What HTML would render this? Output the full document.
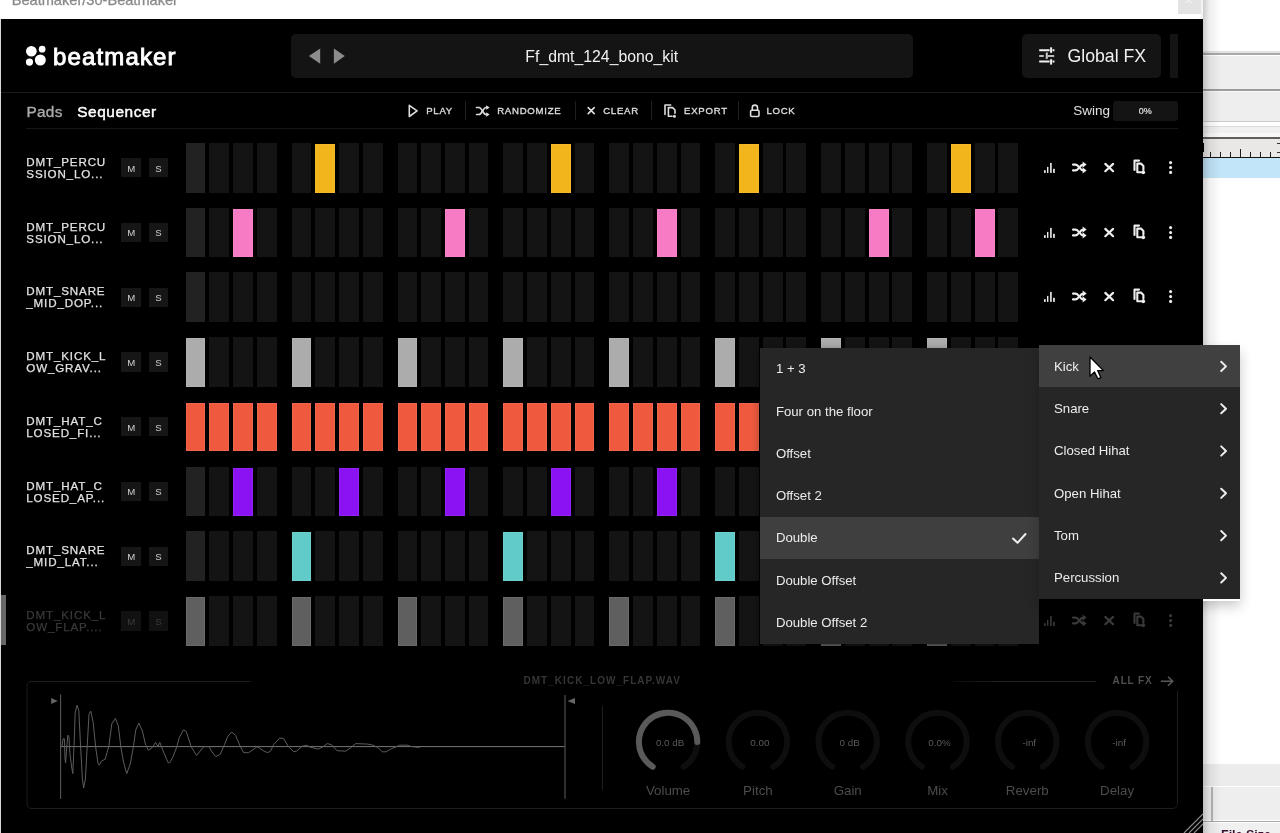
<!DOCTYPE html><html><head><meta charset="utf-8"><style>html,body{margin:0;padding:0;}body{width:1280px;height:833px;overflow:hidden;position:relative;background:#fff;font-family:"Liberation Sans", sans-serif;}#root{position:absolute;left:0;top:0;width:1280px;height:833px;will-change:transform;}#root>div,#root>svg{position:absolute;}</style></head><body><div id="root"><div style="left:1203px;top:0px;width:77px;height:833px;background:#ffffff;"></div>
<div style="left:1203px;top:51px;width:77px;height:2px;background:#e2e2e2;"></div>
<div style="left:1203px;top:53px;width:77px;height:2px;background:#a9a9a9;"></div>
<div style="left:1203px;top:55px;width:77px;height:1px;background:#ffffff;"></div>
<div style="left:1203px;top:56px;width:77px;height:33px;background:#eeeeee;"></div>
<div style="left:1203px;top:89px;width:77px;height:2px;background:#9c9c9c;"></div>
<div style="left:1203px;top:91px;width:77px;height:1px;background:#fafafa;"></div>
<div style="left:1203px;top:92px;width:77px;height:29px;background:#eeeeee;"></div>
<div style="left:1203px;top:121px;width:77px;height:1px;background:#cccccc;"></div>
<div style="left:1203px;top:122px;width:77px;height:4px;background:#ffffff;"></div>
<div style="left:1203px;top:126px;width:77px;height:1px;background:#dcdcdc;"></div>
<div style="left:1203px;top:127px;width:77px;height:6px;background:#f0f0f0;"></div>
<div style="left:1203px;top:133px;width:77px;height:4px;background:#f8f8f8;"></div>
<div style="left:1203px;top:137px;width:77px;height:2px;background:#5e5e5e;"></div>
<div style="left:1203px;top:139px;width:77px;height:18px;background:#e9e8e6;"></div>
<div style="left:1210.0px;top:152px;width:1px;height:5px;background:#1e1e1e"></div><div style="left:1220.0px;top:152px;width:1px;height:5px;background:#1e1e1e"></div><div style="left:1230.1px;top:152px;width:1px;height:5px;background:#1e1e1e"></div><div style="left:1240.2px;top:149px;width:1px;height:8px;background:#1e1e1e"></div><div style="left:1250.2px;top:152px;width:1px;height:5px;background:#1e1e1e"></div><div style="left:1260.2px;top:152px;width:1px;height:5px;background:#1e1e1e"></div><div style="left:1270.3px;top:152px;width:1px;height:5px;background:#1e1e1e"></div>
<div style="left:1277px;top:143px;width:3px;height:1.2px;background:#333333;"></div>
<div style="left:1277px;top:152px;width:3px;height:1.2px;background:#333333;"></div>
<div style="left:1203px;top:143px;width:1px;height:8.5px;background:#000000;"></div>
<div style="left:1203px;top:157px;width:77px;height:1px;background:#111111;"></div>
<div style="left:1203px;top:158px;width:77px;height:19.6px;background:#c2e5f9;"></div>
<div style="left:1203px;top:764px;width:77px;height:22px;background:#ececec;"></div>
<div style="left:1203px;top:787px;width:77px;height:33px;background:#eeeeee;"></div>
<div style="left:1211px;top:787px;width:1.6px;height:33.5px;background:#b4b4b4;"></div>
<div style="left:1214px;top:824px;width:1px;height:9px;background:#dddddd;"></div>
<div style="left:1203px;top:820.5px;width:77px;height:1.3px;background:#a8a8a8;"></div>
<div style="left:1203px;top:821.8px;width:77px;height:1.4px;background:#ffffff;"></div>
<div style="left:1203px;top:823px;width:77px;height:10px;background:#f0f0f0;"></div>
<div style="left:1221.00px;top:827.86px;font-size:12.5px;line-height:15.62px;color:#3a1030;text-align:left;white-space:nowrap;font-weight:bold;">File Size</div>
<div style="left:1203px;top:0px;width:18px;height:833px;background:linear-gradient(to right, rgba(0,0,0,0.2), rgba(0,0,0,0.07) 35%, rgba(0,0,0,0));"></div>
<div style="left:0px;top:0px;width:1203px;height:19px;background:#ffffff;"></div>
<div style="left:11.70px;top:-8.88px;font-size:14.6px;line-height:18.25px;color:#8a8a8a;text-align:left;white-space:nowrap;-webkit-text-stroke:0.3px #8a8a8a;">Beatmaker/30-Beatmaker</div>
<div style="left:1178px;top:0px;width:22.8px;height:13.7px;background:#e3e3e3;"></div>
<div style="left:1200.8px;top:0px;width:2.2px;height:18.75px;background:#f4f4f4;"></div>
<div style="left:1184.50px;top:-6.66px;font-size:12px;line-height:15.0px;color:#f2f2f2;text-align:left;white-space:nowrap;font-size:14px;">×</div>
<div style="left:0px;top:19px;width:1px;height:814px;background:#d8d8d8;"></div>
<div style="left:1px;top:19px;width:1202px;height:814px;background:#000000;"></div>
<svg style="left:0;top:0" width="1203" height="130" viewBox="0 0 1203 130"><circle cx="31.36" cy="51.27" r="5.35" fill="#fff"/><circle cx="42.16" cy="49.2" r="3.35" fill="#fff"/><circle cx="29.47" cy="62.1" r="3.6" fill="#fff"/><circle cx="40.3" cy="60" r="5.5" fill="#fff"/></svg>
<div style="left:53.00px;top:41.98px;font-size:24px;line-height:30.0px;color:#ffffff;text-align:left;white-space:nowrap;-webkit-text-stroke:0.9px #fff;letter-spacing:1.15px;">beatmaker</div>
<div style="left:290.5px;top:33.7px;width:622.5px;height:44.3px;background:#141414;border-radius:5px;"></div>
<svg style="left:300px;top:40px" width="60" height="30" viewBox="300 40 60 30"><path d="M320.2 48.4 L308.9 56.05 L320.2 63.7 Z" fill="#8c8c8c"/><path d="M333.9 48.4 L344.8 56.05 L333.9 63.7 Z" fill="#8c8c8c"/></svg>
<div style="left:290.50px;top:46.85px;font-size:15.8px;line-height:19.75px;color:#f0f0f0;text-align:center;width:622.5px;">Ff_dmt_124_bono_kit</div>
<div style="left:1022.3px;top:33.75px;width:139px;height:44.25px;background:#141414;border-radius:5px;"></div>
<div style="left:1170.25px;top:33.75px;width:7.25px;height:44.25px;background:#141414;"></div>
<svg style="left:1030px;top:40px" width="30" height="30" viewBox="1030 40 30 30"><g stroke="#f2f2f2" stroke-width="2" fill="none"><path d="M1039.2 50.2 H1049.6 M1052.5 50.2 H1054.5"/><path d="M1051.1 47.3 V52.8"/><path d="M1039.2 56 H1043.8 M1047.8 56 H1054.2" stroke="#bbbbbb"/><path d="M1046.8 52.5 V58.9" stroke="#cccccc"/><path d="M1039.2 61.6 H1049.6 M1052.5 61.6 H1054.5"/><path d="M1051.1 59.2 V64.6"/></g></svg>
<div style="left:1067.50px;top:44.91px;font-size:17.7px;line-height:22.12px;color:#f0f0f0;text-align:left;white-space:nowrap;">Global FX</div>
<div style="left:1px;top:92.3px;width:1202px;height:1px;background:#1a1a1a;"></div>
<div style="left:26.40px;top:101.79px;font-size:15.4px;line-height:19.25px;color:#aaaaaa;text-align:left;white-space:nowrap;-webkit-text-stroke:0.35px #aaaaaa;letter-spacing:0.3px;">Pads</div>
<div style="left:77.30px;top:101.79px;font-size:15.4px;line-height:19.25px;color:#ffffff;text-align:left;white-space:nowrap;-webkit-text-stroke:0.45px #fff;letter-spacing:0.55px;">Sequencer</div>
<div style="left:465.1px;top:101px;width:1px;height:19px;background:#1e1e1e;"></div>
<div style="left:574.8px;top:101px;width:1px;height:19px;background:#1e1e1e;"></div>
<div style="left:650.8px;top:101px;width:1px;height:19px;background:#1e1e1e;"></div>
<div style="left:737.5px;top:101px;width:1px;height:19px;background:#1e1e1e;"></div>
<div style="left:426.20px;top:105.07px;font-size:9.6px;line-height:12.0px;color:#dcdcdc;text-align:left;white-space:nowrap;letter-spacing:0.75px;-webkit-text-stroke:0.35px #dcdcdc;">PLAY</div>
<div style="left:497.20px;top:105.07px;font-size:9.6px;line-height:12.0px;color:#dcdcdc;text-align:left;white-space:nowrap;letter-spacing:0.75px;-webkit-text-stroke:0.35px #dcdcdc;">RANDOMIZE</div>
<div style="left:603.20px;top:105.07px;font-size:9.6px;line-height:12.0px;color:#dcdcdc;text-align:left;white-space:nowrap;letter-spacing:0.75px;-webkit-text-stroke:0.35px #dcdcdc;">CLEAR</div>
<div style="left:684.00px;top:105.07px;font-size:9.6px;line-height:12.0px;color:#dcdcdc;text-align:left;white-space:nowrap;letter-spacing:0.75px;-webkit-text-stroke:0.35px #dcdcdc;">EXPORT</div>
<div style="left:766.40px;top:105.07px;font-size:9.6px;line-height:12.0px;color:#dcdcdc;text-align:left;white-space:nowrap;letter-spacing:0.75px;-webkit-text-stroke:0.35px #dcdcdc;">LOCK</div>
<svg style="left:400px;top:98px" width="370" height="26" viewBox="400 98 370 26"><g stroke="#dddddd" stroke-width="1.6" fill="none" stroke-linejoin="round" stroke-linecap="round"><path d="M409.3 105.3 L417.1 110.9 L409.3 116.5 Z"/><path d="M476.5 107.5 H479 C482 107.5 483 114.5 486 114.5 H488"/><path d="M476.5 114.5 H479 C482 114.5 483 107.5 486 107.5 H488"/><path d="M588.2 107.6 L594.2 113.6 M594.2 107.6 L588.2 113.6"/><path d="M670.7 105 H665 V114.5"/><path d="M668.4 107.6 H672.6 L675 110 V113.2 M668.4 107.6 V116.2 H672"/><path d="M752.3 110.3 V107.6 C752.3 104.3 757.5 104.3 757.5 107.6 V110.3"/><rect x="750.6" y="110.3" width="8.4" height="6.2" rx="1.2"/></g><g fill="#dddddd"><path d="M486.2 105.2 L489.6 107.5 L486.2 109.8 Z"/><path d="M486.2 112.2 L489.6 114.5 L486.2 116.8 Z"/><circle cx="674.4" cy="116.2" r="1.5"/></g></svg>
<div style="left:1073.20px;top:102.68px;font-size:13.5px;line-height:16.88px;color:#e0e0e0;text-align:left;white-space:nowrap;">Swing</div>
<div style="left:1113px;top:100.9px;width:64.6px;height:19.7px;background:#141414;border-radius:3px;"></div>
<div style="left:1113.00px;top:105.56px;font-size:9px;line-height:11.25px;color:#e2e2e2;text-align:center;width:64.6px;-webkit-text-stroke:0.2px #e2e2e2;">0%</div>
<div style="left:26.25px;top:128.1px;width:1151.5px;height:1px;background:#161616;"></div>
<div style="left:26.30px;top:155.03px;font-size:11.6px;line-height:14.5px;color:#e2e2e2;text-align:left;white-space:nowrap;letter-spacing:0.85px;-webkit-text-stroke:0.25px #e2e2e2;">DMT_PERCU</div>
<div style="left:26.30px;top:166.93px;font-size:11.6px;line-height:14.5px;color:#e2e2e2;text-align:left;white-space:nowrap;letter-spacing:0.85px;-webkit-text-stroke:0.25px #e2e2e2;">SSION_LO...</div>
<div style="left:121.2px;top:158.3px;width:19.5px;height:19.2px;background:#161616;"></div>
<div style="left:121.50px;top:162.67px;font-size:9.6px;line-height:12.0px;color:#d0d0d0;text-align:center;width:19.5px;">M</div>
<div style="left:148.5px;top:158.3px;width:19.5px;height:19.2px;background:#161616;"></div>
<div style="left:148.80px;top:162.67px;font-size:9.6px;line-height:12.0px;color:#d0d0d0;text-align:center;width:19.5px;">S</div>
<div style="left:185.60px;top:143.00px;width:19.9px;height:49.6px;background:#222222"></div><div style="left:209.30px;top:143.00px;width:19.9px;height:49.6px;background:#141414"></div><div style="left:233.00px;top:143.00px;width:19.9px;height:49.6px;background:#141414"></div><div style="left:256.70px;top:143.00px;width:19.9px;height:49.6px;background:#141414"></div><div style="left:291.55px;top:143.00px;width:19.9px;height:49.6px;background:#141414"></div><div style="left:315.25px;top:144.00px;width:19.9px;height:48.6px;background:#f2b51b;box-shadow:inset 0 0 0 1px rgba(255,255,255,0.07)"></div><div style="left:338.95px;top:143.00px;width:19.9px;height:49.6px;background:#141414"></div><div style="left:362.65px;top:143.00px;width:19.9px;height:49.6px;background:#141414"></div><div style="left:397.50px;top:143.00px;width:19.9px;height:49.6px;background:#141414"></div><div style="left:421.20px;top:143.00px;width:19.9px;height:49.6px;background:#141414"></div><div style="left:444.90px;top:143.00px;width:19.9px;height:49.6px;background:#141414"></div><div style="left:468.60px;top:143.00px;width:19.9px;height:49.6px;background:#141414"></div><div style="left:503.45px;top:143.00px;width:19.9px;height:49.6px;background:#141414"></div><div style="left:527.15px;top:143.00px;width:19.9px;height:49.6px;background:#141414"></div><div style="left:550.85px;top:144.00px;width:19.9px;height:48.6px;background:#f2b51b;box-shadow:inset 0 0 0 1px rgba(255,255,255,0.07)"></div><div style="left:574.55px;top:143.00px;width:19.9px;height:49.6px;background:#141414"></div><div style="left:609.40px;top:143.00px;width:19.9px;height:49.6px;background:#141414"></div><div style="left:633.10px;top:143.00px;width:19.9px;height:49.6px;background:#141414"></div><div style="left:656.80px;top:143.00px;width:19.9px;height:49.6px;background:#141414"></div><div style="left:680.50px;top:143.00px;width:19.9px;height:49.6px;background:#141414"></div><div style="left:715.35px;top:143.00px;width:19.9px;height:49.6px;background:#141414"></div><div style="left:739.05px;top:144.00px;width:19.9px;height:48.6px;background:#f2b51b;box-shadow:inset 0 0 0 1px rgba(255,255,255,0.07)"></div><div style="left:762.75px;top:143.00px;width:19.9px;height:49.6px;background:#141414"></div><div style="left:786.45px;top:143.00px;width:19.9px;height:49.6px;background:#141414"></div><div style="left:821.30px;top:143.00px;width:19.9px;height:49.6px;background:#141414"></div><div style="left:845.00px;top:143.00px;width:19.9px;height:49.6px;background:#141414"></div><div style="left:868.70px;top:143.00px;width:19.9px;height:49.6px;background:#141414"></div><div style="left:892.40px;top:143.00px;width:19.9px;height:49.6px;background:#141414"></div><div style="left:927.25px;top:143.00px;width:19.9px;height:49.6px;background:#141414"></div><div style="left:950.95px;top:144.00px;width:19.9px;height:48.6px;background:#f2b51b;box-shadow:inset 0 0 0 1px rgba(255,255,255,0.07)"></div><div style="left:974.65px;top:143.00px;width:19.9px;height:49.6px;background:#141414"></div><div style="left:998.35px;top:143.00px;width:19.9px;height:49.6px;background:#141414"></div>
<svg style="left:1035px;top:143.00px" width="150" height="50" viewBox="1035 143 150 50"><g fill="#eeeeee"><rect x="1044" y="170.2" width="1.7" height="2.7"/><rect x="1047" y="166.9" width="1.4" height="6"/><rect x="1050.1" y="162.9" width="1.6" height="10"/><rect x="1053.1" y="168.8" width="1.7" height="4.1"/><path d="M1082.6 161.4 L1086.6 164.6 L1082.6 167.8 Z"/><path d="M1082.6 167.2 L1086.6 170.4 L1082.6 173.6 Z"/><circle cx="1143.2" cy="172.3" r="1.9"/><circle cx="1170.6" cy="162.6" r="1.55"/><circle cx="1170.6" cy="167.5" r="1.55"/><circle cx="1170.6" cy="172.4" r="1.55"/></g><g stroke="#eeeeee" stroke-width="2.1" fill="none" stroke-linecap="round" stroke-linejoin="round"><path d="M1073 164.6 H1075.5 C1079 164.6 1079.5 170.4 1083.5 170.4 H1084"/><path d="M1073 170.4 H1075.5 C1079 170.4 1079.5 164.6 1083.5 164.6 H1084"/><path d="M1105.3 163.9 L1113.1 171.2 M1113.1 163.9 L1105.3 171.2" stroke-width="2.2"/><path d="M1139 160.6 H1134.5 V170"/><path d="M1137.3 163.6 H1141 L1143.4 166 V170 M1137.3 163.6 V172.3 H1141"/></g></svg>
<div style="left:26.30px;top:219.75px;font-size:11.6px;line-height:14.5px;color:#e2e2e2;text-align:left;white-space:nowrap;letter-spacing:0.85px;-webkit-text-stroke:0.25px #e2e2e2;">DMT_PERCU</div>
<div style="left:26.30px;top:231.65px;font-size:11.6px;line-height:14.5px;color:#e2e2e2;text-align:left;white-space:nowrap;letter-spacing:0.85px;-webkit-text-stroke:0.25px #e2e2e2;">SSION_LO...</div>
<div style="left:121.2px;top:223.02px;width:19.5px;height:19.2px;background:#161616;"></div>
<div style="left:121.50px;top:227.39px;font-size:9.6px;line-height:12.0px;color:#d0d0d0;text-align:center;width:19.5px;">M</div>
<div style="left:148.5px;top:223.02px;width:19.5px;height:19.2px;background:#161616;"></div>
<div style="left:148.80px;top:227.39px;font-size:9.6px;line-height:12.0px;color:#d0d0d0;text-align:center;width:19.5px;">S</div>
<div style="left:185.60px;top:207.72px;width:19.9px;height:49.6px;background:#222222"></div><div style="left:209.30px;top:207.72px;width:19.9px;height:49.6px;background:#141414"></div><div style="left:233.00px;top:208.72px;width:19.9px;height:48.6px;background:#f77bc4;box-shadow:inset 0 0 0 1px rgba(255,255,255,0.07)"></div><div style="left:256.70px;top:207.72px;width:19.9px;height:49.6px;background:#141414"></div><div style="left:291.55px;top:207.72px;width:19.9px;height:49.6px;background:#141414"></div><div style="left:315.25px;top:207.72px;width:19.9px;height:49.6px;background:#141414"></div><div style="left:338.95px;top:207.72px;width:19.9px;height:49.6px;background:#141414"></div><div style="left:362.65px;top:207.72px;width:19.9px;height:49.6px;background:#141414"></div><div style="left:397.50px;top:207.72px;width:19.9px;height:49.6px;background:#141414"></div><div style="left:421.20px;top:207.72px;width:19.9px;height:49.6px;background:#141414"></div><div style="left:444.90px;top:208.72px;width:19.9px;height:48.6px;background:#f77bc4;box-shadow:inset 0 0 0 1px rgba(255,255,255,0.07)"></div><div style="left:468.60px;top:207.72px;width:19.9px;height:49.6px;background:#141414"></div><div style="left:503.45px;top:207.72px;width:19.9px;height:49.6px;background:#141414"></div><div style="left:527.15px;top:207.72px;width:19.9px;height:49.6px;background:#141414"></div><div style="left:550.85px;top:207.72px;width:19.9px;height:49.6px;background:#141414"></div><div style="left:574.55px;top:207.72px;width:19.9px;height:49.6px;background:#141414"></div><div style="left:609.40px;top:207.72px;width:19.9px;height:49.6px;background:#141414"></div><div style="left:633.10px;top:207.72px;width:19.9px;height:49.6px;background:#141414"></div><div style="left:656.80px;top:208.72px;width:19.9px;height:48.6px;background:#f77bc4;box-shadow:inset 0 0 0 1px rgba(255,255,255,0.07)"></div><div style="left:680.50px;top:207.72px;width:19.9px;height:49.6px;background:#141414"></div><div style="left:715.35px;top:207.72px;width:19.9px;height:49.6px;background:#141414"></div><div style="left:739.05px;top:207.72px;width:19.9px;height:49.6px;background:#141414"></div><div style="left:762.75px;top:207.72px;width:19.9px;height:49.6px;background:#141414"></div><div style="left:786.45px;top:207.72px;width:19.9px;height:49.6px;background:#141414"></div><div style="left:821.30px;top:207.72px;width:19.9px;height:49.6px;background:#141414"></div><div style="left:845.00px;top:207.72px;width:19.9px;height:49.6px;background:#141414"></div><div style="left:868.70px;top:208.72px;width:19.9px;height:48.6px;background:#f77bc4;box-shadow:inset 0 0 0 1px rgba(255,255,255,0.07)"></div><div style="left:892.40px;top:207.72px;width:19.9px;height:49.6px;background:#141414"></div><div style="left:927.25px;top:207.72px;width:19.9px;height:49.6px;background:#141414"></div><div style="left:950.95px;top:207.72px;width:19.9px;height:49.6px;background:#141414"></div><div style="left:974.65px;top:208.72px;width:19.9px;height:48.6px;background:#f77bc4;box-shadow:inset 0 0 0 1px rgba(255,255,255,0.07)"></div><div style="left:998.35px;top:207.72px;width:19.9px;height:49.6px;background:#141414"></div>
<svg style="left:1035px;top:207.72px" width="150" height="50" viewBox="1035 143 150 50"><g fill="#eeeeee"><rect x="1044" y="170.2" width="1.7" height="2.7"/><rect x="1047" y="166.9" width="1.4" height="6"/><rect x="1050.1" y="162.9" width="1.6" height="10"/><rect x="1053.1" y="168.8" width="1.7" height="4.1"/><path d="M1082.6 161.4 L1086.6 164.6 L1082.6 167.8 Z"/><path d="M1082.6 167.2 L1086.6 170.4 L1082.6 173.6 Z"/><circle cx="1143.2" cy="172.3" r="1.9"/><circle cx="1170.6" cy="162.6" r="1.55"/><circle cx="1170.6" cy="167.5" r="1.55"/><circle cx="1170.6" cy="172.4" r="1.55"/></g><g stroke="#eeeeee" stroke-width="2.1" fill="none" stroke-linecap="round" stroke-linejoin="round"><path d="M1073 164.6 H1075.5 C1079 164.6 1079.5 170.4 1083.5 170.4 H1084"/><path d="M1073 170.4 H1075.5 C1079 170.4 1079.5 164.6 1083.5 164.6 H1084"/><path d="M1105.3 163.9 L1113.1 171.2 M1113.1 163.9 L1105.3 171.2" stroke-width="2.2"/><path d="M1139 160.6 H1134.5 V170"/><path d="M1137.3 163.6 H1141 L1143.4 166 V170 M1137.3 163.6 V172.3 H1141"/></g></svg>
<div style="left:26.30px;top:284.47px;font-size:11.6px;line-height:14.5px;color:#e2e2e2;text-align:left;white-space:nowrap;letter-spacing:0.85px;-webkit-text-stroke:0.25px #e2e2e2;">DMT_SNARE</div>
<div style="left:26.30px;top:296.37px;font-size:11.6px;line-height:14.5px;color:#e2e2e2;text-align:left;white-space:nowrap;letter-spacing:0.85px;-webkit-text-stroke:0.25px #e2e2e2;">_MID_DOP...</div>
<div style="left:121.2px;top:287.74px;width:19.5px;height:19.2px;background:#161616;"></div>
<div style="left:121.50px;top:292.11px;font-size:9.6px;line-height:12.0px;color:#d0d0d0;text-align:center;width:19.5px;">M</div>
<div style="left:148.5px;top:287.74px;width:19.5px;height:19.2px;background:#161616;"></div>
<div style="left:148.80px;top:292.11px;font-size:9.6px;line-height:12.0px;color:#d0d0d0;text-align:center;width:19.5px;">S</div>
<div style="left:185.60px;top:272.44px;width:19.9px;height:49.6px;background:#222222"></div><div style="left:209.30px;top:272.44px;width:19.9px;height:49.6px;background:#141414"></div><div style="left:233.00px;top:272.44px;width:19.9px;height:49.6px;background:#141414"></div><div style="left:256.70px;top:272.44px;width:19.9px;height:49.6px;background:#141414"></div><div style="left:291.55px;top:272.44px;width:19.9px;height:49.6px;background:#141414"></div><div style="left:315.25px;top:272.44px;width:19.9px;height:49.6px;background:#141414"></div><div style="left:338.95px;top:272.44px;width:19.9px;height:49.6px;background:#141414"></div><div style="left:362.65px;top:272.44px;width:19.9px;height:49.6px;background:#141414"></div><div style="left:397.50px;top:272.44px;width:19.9px;height:49.6px;background:#141414"></div><div style="left:421.20px;top:272.44px;width:19.9px;height:49.6px;background:#141414"></div><div style="left:444.90px;top:272.44px;width:19.9px;height:49.6px;background:#141414"></div><div style="left:468.60px;top:272.44px;width:19.9px;height:49.6px;background:#141414"></div><div style="left:503.45px;top:272.44px;width:19.9px;height:49.6px;background:#141414"></div><div style="left:527.15px;top:272.44px;width:19.9px;height:49.6px;background:#141414"></div><div style="left:550.85px;top:272.44px;width:19.9px;height:49.6px;background:#141414"></div><div style="left:574.55px;top:272.44px;width:19.9px;height:49.6px;background:#141414"></div><div style="left:609.40px;top:272.44px;width:19.9px;height:49.6px;background:#141414"></div><div style="left:633.10px;top:272.44px;width:19.9px;height:49.6px;background:#141414"></div><div style="left:656.80px;top:272.44px;width:19.9px;height:49.6px;background:#141414"></div><div style="left:680.50px;top:272.44px;width:19.9px;height:49.6px;background:#141414"></div><div style="left:715.35px;top:272.44px;width:19.9px;height:49.6px;background:#141414"></div><div style="left:739.05px;top:272.44px;width:19.9px;height:49.6px;background:#141414"></div><div style="left:762.75px;top:272.44px;width:19.9px;height:49.6px;background:#141414"></div><div style="left:786.45px;top:272.44px;width:19.9px;height:49.6px;background:#141414"></div><div style="left:821.30px;top:272.44px;width:19.9px;height:49.6px;background:#141414"></div><div style="left:845.00px;top:272.44px;width:19.9px;height:49.6px;background:#141414"></div><div style="left:868.70px;top:272.44px;width:19.9px;height:49.6px;background:#141414"></div><div style="left:892.40px;top:272.44px;width:19.9px;height:49.6px;background:#141414"></div><div style="left:927.25px;top:272.44px;width:19.9px;height:49.6px;background:#141414"></div><div style="left:950.95px;top:272.44px;width:19.9px;height:49.6px;background:#141414"></div><div style="left:974.65px;top:272.44px;width:19.9px;height:49.6px;background:#141414"></div><div style="left:998.35px;top:272.44px;width:19.9px;height:49.6px;background:#141414"></div>
<svg style="left:1035px;top:272.44px" width="150" height="50" viewBox="1035 143 150 50"><g fill="#eeeeee"><rect x="1044" y="170.2" width="1.7" height="2.7"/><rect x="1047" y="166.9" width="1.4" height="6"/><rect x="1050.1" y="162.9" width="1.6" height="10"/><rect x="1053.1" y="168.8" width="1.7" height="4.1"/><path d="M1082.6 161.4 L1086.6 164.6 L1082.6 167.8 Z"/><path d="M1082.6 167.2 L1086.6 170.4 L1082.6 173.6 Z"/><circle cx="1143.2" cy="172.3" r="1.9"/><circle cx="1170.6" cy="162.6" r="1.55"/><circle cx="1170.6" cy="167.5" r="1.55"/><circle cx="1170.6" cy="172.4" r="1.55"/></g><g stroke="#eeeeee" stroke-width="2.1" fill="none" stroke-linecap="round" stroke-linejoin="round"><path d="M1073 164.6 H1075.5 C1079 164.6 1079.5 170.4 1083.5 170.4 H1084"/><path d="M1073 170.4 H1075.5 C1079 170.4 1079.5 164.6 1083.5 164.6 H1084"/><path d="M1105.3 163.9 L1113.1 171.2 M1113.1 163.9 L1105.3 171.2" stroke-width="2.2"/><path d="M1139 160.6 H1134.5 V170"/><path d="M1137.3 163.6 H1141 L1143.4 166 V170 M1137.3 163.6 V172.3 H1141"/></g></svg>
<div style="left:26.30px;top:349.19px;font-size:11.6px;line-height:14.5px;color:#e2e2e2;text-align:left;white-space:nowrap;letter-spacing:0.85px;-webkit-text-stroke:0.25px #e2e2e2;">DMT_KICK_L</div>
<div style="left:26.30px;top:361.09px;font-size:11.6px;line-height:14.5px;color:#e2e2e2;text-align:left;white-space:nowrap;letter-spacing:0.85px;-webkit-text-stroke:0.25px #e2e2e2;">OW_GRAV...</div>
<div style="left:121.2px;top:352.46px;width:19.5px;height:19.2px;background:#161616;"></div>
<div style="left:121.50px;top:356.83px;font-size:9.6px;line-height:12.0px;color:#d0d0d0;text-align:center;width:19.5px;">M</div>
<div style="left:148.5px;top:352.46px;width:19.5px;height:19.2px;background:#161616;"></div>
<div style="left:148.80px;top:356.83px;font-size:9.6px;line-height:12.0px;color:#d0d0d0;text-align:center;width:19.5px;">S</div>
<div style="left:185.60px;top:338.16px;width:19.9px;height:48.6px;background:#acacac;box-shadow:inset 0 0 0 1px rgba(255,255,255,0.07)"></div><div style="left:209.30px;top:337.16px;width:19.9px;height:49.6px;background:#141414"></div><div style="left:233.00px;top:337.16px;width:19.9px;height:49.6px;background:#141414"></div><div style="left:256.70px;top:337.16px;width:19.9px;height:49.6px;background:#141414"></div><div style="left:291.55px;top:338.16px;width:19.9px;height:48.6px;background:#acacac;box-shadow:inset 0 0 0 1px rgba(255,255,255,0.07)"></div><div style="left:315.25px;top:337.16px;width:19.9px;height:49.6px;background:#141414"></div><div style="left:338.95px;top:337.16px;width:19.9px;height:49.6px;background:#141414"></div><div style="left:362.65px;top:337.16px;width:19.9px;height:49.6px;background:#141414"></div><div style="left:397.50px;top:338.16px;width:19.9px;height:48.6px;background:#acacac;box-shadow:inset 0 0 0 1px rgba(255,255,255,0.07)"></div><div style="left:421.20px;top:337.16px;width:19.9px;height:49.6px;background:#141414"></div><div style="left:444.90px;top:337.16px;width:19.9px;height:49.6px;background:#141414"></div><div style="left:468.60px;top:337.16px;width:19.9px;height:49.6px;background:#141414"></div><div style="left:503.45px;top:338.16px;width:19.9px;height:48.6px;background:#acacac;box-shadow:inset 0 0 0 1px rgba(255,255,255,0.07)"></div><div style="left:527.15px;top:337.16px;width:19.9px;height:49.6px;background:#141414"></div><div style="left:550.85px;top:337.16px;width:19.9px;height:49.6px;background:#141414"></div><div style="left:574.55px;top:337.16px;width:19.9px;height:49.6px;background:#141414"></div><div style="left:609.40px;top:338.16px;width:19.9px;height:48.6px;background:#acacac;box-shadow:inset 0 0 0 1px rgba(255,255,255,0.07)"></div><div style="left:633.10px;top:337.16px;width:19.9px;height:49.6px;background:#141414"></div><div style="left:656.80px;top:337.16px;width:19.9px;height:49.6px;background:#141414"></div><div style="left:680.50px;top:337.16px;width:19.9px;height:49.6px;background:#141414"></div><div style="left:715.35px;top:338.16px;width:19.9px;height:48.6px;background:#acacac;box-shadow:inset 0 0 0 1px rgba(255,255,255,0.07)"></div><div style="left:739.05px;top:337.16px;width:19.9px;height:49.6px;background:#141414"></div><div style="left:762.75px;top:337.16px;width:19.9px;height:49.6px;background:#141414"></div><div style="left:786.45px;top:337.16px;width:19.9px;height:49.6px;background:#141414"></div><div style="left:821.30px;top:338.16px;width:19.9px;height:48.6px;background:#acacac;box-shadow:inset 0 0 0 1px rgba(255,255,255,0.07)"></div><div style="left:845.00px;top:337.16px;width:19.9px;height:49.6px;background:#141414"></div><div style="left:868.70px;top:337.16px;width:19.9px;height:49.6px;background:#141414"></div><div style="left:892.40px;top:337.16px;width:19.9px;height:49.6px;background:#141414"></div><div style="left:927.25px;top:338.16px;width:19.9px;height:48.6px;background:#acacac;box-shadow:inset 0 0 0 1px rgba(255,255,255,0.07)"></div><div style="left:950.95px;top:337.16px;width:19.9px;height:49.6px;background:#141414"></div><div style="left:974.65px;top:337.16px;width:19.9px;height:49.6px;background:#141414"></div><div style="left:998.35px;top:337.16px;width:19.9px;height:49.6px;background:#141414"></div>
<svg style="left:1035px;top:337.16px" width="150" height="50" viewBox="1035 143 150 50"><g fill="#eeeeee"><rect x="1044" y="170.2" width="1.7" height="2.7"/><rect x="1047" y="166.9" width="1.4" height="6"/><rect x="1050.1" y="162.9" width="1.6" height="10"/><rect x="1053.1" y="168.8" width="1.7" height="4.1"/><path d="M1082.6 161.4 L1086.6 164.6 L1082.6 167.8 Z"/><path d="M1082.6 167.2 L1086.6 170.4 L1082.6 173.6 Z"/><circle cx="1143.2" cy="172.3" r="1.9"/><circle cx="1170.6" cy="162.6" r="1.55"/><circle cx="1170.6" cy="167.5" r="1.55"/><circle cx="1170.6" cy="172.4" r="1.55"/></g><g stroke="#eeeeee" stroke-width="2.1" fill="none" stroke-linecap="round" stroke-linejoin="round"><path d="M1073 164.6 H1075.5 C1079 164.6 1079.5 170.4 1083.5 170.4 H1084"/><path d="M1073 170.4 H1075.5 C1079 170.4 1079.5 164.6 1083.5 164.6 H1084"/><path d="M1105.3 163.9 L1113.1 171.2 M1113.1 163.9 L1105.3 171.2" stroke-width="2.2"/><path d="M1139 160.6 H1134.5 V170"/><path d="M1137.3 163.6 H1141 L1143.4 166 V170 M1137.3 163.6 V172.3 H1141"/></g></svg>
<div style="left:26.30px;top:413.91px;font-size:11.6px;line-height:14.5px;color:#e2e2e2;text-align:left;white-space:nowrap;letter-spacing:0.85px;-webkit-text-stroke:0.25px #e2e2e2;">DMT_HAT_C</div>
<div style="left:26.30px;top:425.81px;font-size:11.6px;line-height:14.5px;color:#e2e2e2;text-align:left;white-space:nowrap;letter-spacing:0.85px;-webkit-text-stroke:0.25px #e2e2e2;">LOSED_FI...</div>
<div style="left:121.2px;top:417.18px;width:19.5px;height:19.2px;background:#161616;"></div>
<div style="left:121.50px;top:421.55px;font-size:9.6px;line-height:12.0px;color:#d0d0d0;text-align:center;width:19.5px;">M</div>
<div style="left:148.5px;top:417.18px;width:19.5px;height:19.2px;background:#161616;"></div>
<div style="left:148.80px;top:421.55px;font-size:9.6px;line-height:12.0px;color:#d0d0d0;text-align:center;width:19.5px;">S</div>
<div style="left:185.60px;top:402.88px;width:19.9px;height:48.6px;background:#ef5a3e;box-shadow:inset 0 0 0 1px rgba(255,255,255,0.07)"></div><div style="left:209.30px;top:402.88px;width:19.9px;height:48.6px;background:#ef5a3e;box-shadow:inset 0 0 0 1px rgba(255,255,255,0.07)"></div><div style="left:233.00px;top:402.88px;width:19.9px;height:48.6px;background:#ef5a3e;box-shadow:inset 0 0 0 1px rgba(255,255,255,0.07)"></div><div style="left:256.70px;top:402.88px;width:19.9px;height:48.6px;background:#ef5a3e;box-shadow:inset 0 0 0 1px rgba(255,255,255,0.07)"></div><div style="left:291.55px;top:402.88px;width:19.9px;height:48.6px;background:#ef5a3e;box-shadow:inset 0 0 0 1px rgba(255,255,255,0.07)"></div><div style="left:315.25px;top:402.88px;width:19.9px;height:48.6px;background:#ef5a3e;box-shadow:inset 0 0 0 1px rgba(255,255,255,0.07)"></div><div style="left:338.95px;top:402.88px;width:19.9px;height:48.6px;background:#ef5a3e;box-shadow:inset 0 0 0 1px rgba(255,255,255,0.07)"></div><div style="left:362.65px;top:402.88px;width:19.9px;height:48.6px;background:#ef5a3e;box-shadow:inset 0 0 0 1px rgba(255,255,255,0.07)"></div><div style="left:397.50px;top:402.88px;width:19.9px;height:48.6px;background:#ef5a3e;box-shadow:inset 0 0 0 1px rgba(255,255,255,0.07)"></div><div style="left:421.20px;top:402.88px;width:19.9px;height:48.6px;background:#ef5a3e;box-shadow:inset 0 0 0 1px rgba(255,255,255,0.07)"></div><div style="left:444.90px;top:402.88px;width:19.9px;height:48.6px;background:#ef5a3e;box-shadow:inset 0 0 0 1px rgba(255,255,255,0.07)"></div><div style="left:468.60px;top:402.88px;width:19.9px;height:48.6px;background:#ef5a3e;box-shadow:inset 0 0 0 1px rgba(255,255,255,0.07)"></div><div style="left:503.45px;top:402.88px;width:19.9px;height:48.6px;background:#ef5a3e;box-shadow:inset 0 0 0 1px rgba(255,255,255,0.07)"></div><div style="left:527.15px;top:402.88px;width:19.9px;height:48.6px;background:#ef5a3e;box-shadow:inset 0 0 0 1px rgba(255,255,255,0.07)"></div><div style="left:550.85px;top:402.88px;width:19.9px;height:48.6px;background:#ef5a3e;box-shadow:inset 0 0 0 1px rgba(255,255,255,0.07)"></div><div style="left:574.55px;top:402.88px;width:19.9px;height:48.6px;background:#ef5a3e;box-shadow:inset 0 0 0 1px rgba(255,255,255,0.07)"></div><div style="left:609.40px;top:402.88px;width:19.9px;height:48.6px;background:#ef5a3e;box-shadow:inset 0 0 0 1px rgba(255,255,255,0.07)"></div><div style="left:633.10px;top:402.88px;width:19.9px;height:48.6px;background:#ef5a3e;box-shadow:inset 0 0 0 1px rgba(255,255,255,0.07)"></div><div style="left:656.80px;top:402.88px;width:19.9px;height:48.6px;background:#ef5a3e;box-shadow:inset 0 0 0 1px rgba(255,255,255,0.07)"></div><div style="left:680.50px;top:402.88px;width:19.9px;height:48.6px;background:#ef5a3e;box-shadow:inset 0 0 0 1px rgba(255,255,255,0.07)"></div><div style="left:715.35px;top:402.88px;width:19.9px;height:48.6px;background:#ef5a3e;box-shadow:inset 0 0 0 1px rgba(255,255,255,0.07)"></div><div style="left:739.05px;top:402.88px;width:19.9px;height:48.6px;background:#ef5a3e;box-shadow:inset 0 0 0 1px rgba(255,255,255,0.07)"></div><div style="left:762.75px;top:402.88px;width:19.9px;height:48.6px;background:#ef5a3e;box-shadow:inset 0 0 0 1px rgba(255,255,255,0.07)"></div><div style="left:786.45px;top:402.88px;width:19.9px;height:48.6px;background:#ef5a3e;box-shadow:inset 0 0 0 1px rgba(255,255,255,0.07)"></div><div style="left:821.30px;top:402.88px;width:19.9px;height:48.6px;background:#ef5a3e;box-shadow:inset 0 0 0 1px rgba(255,255,255,0.07)"></div><div style="left:845.00px;top:402.88px;width:19.9px;height:48.6px;background:#ef5a3e;box-shadow:inset 0 0 0 1px rgba(255,255,255,0.07)"></div><div style="left:868.70px;top:402.88px;width:19.9px;height:48.6px;background:#ef5a3e;box-shadow:inset 0 0 0 1px rgba(255,255,255,0.07)"></div><div style="left:892.40px;top:402.88px;width:19.9px;height:48.6px;background:#ef5a3e;box-shadow:inset 0 0 0 1px rgba(255,255,255,0.07)"></div><div style="left:927.25px;top:402.88px;width:19.9px;height:48.6px;background:#ef5a3e;box-shadow:inset 0 0 0 1px rgba(255,255,255,0.07)"></div><div style="left:950.95px;top:402.88px;width:19.9px;height:48.6px;background:#ef5a3e;box-shadow:inset 0 0 0 1px rgba(255,255,255,0.07)"></div><div style="left:974.65px;top:402.88px;width:19.9px;height:48.6px;background:#ef5a3e;box-shadow:inset 0 0 0 1px rgba(255,255,255,0.07)"></div><div style="left:998.35px;top:402.88px;width:19.9px;height:48.6px;background:#ef5a3e;box-shadow:inset 0 0 0 1px rgba(255,255,255,0.07)"></div>
<svg style="left:1035px;top:401.88px" width="150" height="50" viewBox="1035 143 150 50"><g fill="#eeeeee"><rect x="1044" y="170.2" width="1.7" height="2.7"/><rect x="1047" y="166.9" width="1.4" height="6"/><rect x="1050.1" y="162.9" width="1.6" height="10"/><rect x="1053.1" y="168.8" width="1.7" height="4.1"/><path d="M1082.6 161.4 L1086.6 164.6 L1082.6 167.8 Z"/><path d="M1082.6 167.2 L1086.6 170.4 L1082.6 173.6 Z"/><circle cx="1143.2" cy="172.3" r="1.9"/><circle cx="1170.6" cy="162.6" r="1.55"/><circle cx="1170.6" cy="167.5" r="1.55"/><circle cx="1170.6" cy="172.4" r="1.55"/></g><g stroke="#eeeeee" stroke-width="2.1" fill="none" stroke-linecap="round" stroke-linejoin="round"><path d="M1073 164.6 H1075.5 C1079 164.6 1079.5 170.4 1083.5 170.4 H1084"/><path d="M1073 170.4 H1075.5 C1079 170.4 1079.5 164.6 1083.5 164.6 H1084"/><path d="M1105.3 163.9 L1113.1 171.2 M1113.1 163.9 L1105.3 171.2" stroke-width="2.2"/><path d="M1139 160.6 H1134.5 V170"/><path d="M1137.3 163.6 H1141 L1143.4 166 V170 M1137.3 163.6 V172.3 H1141"/></g></svg>
<div style="left:26.30px;top:478.63px;font-size:11.6px;line-height:14.5px;color:#e2e2e2;text-align:left;white-space:nowrap;letter-spacing:0.85px;-webkit-text-stroke:0.25px #e2e2e2;">DMT_HAT_C</div>
<div style="left:26.30px;top:490.53px;font-size:11.6px;line-height:14.5px;color:#e2e2e2;text-align:left;white-space:nowrap;letter-spacing:0.85px;-webkit-text-stroke:0.25px #e2e2e2;">LOSED_AP...</div>
<div style="left:121.2px;top:481.90000000000003px;width:19.5px;height:19.2px;background:#161616;"></div>
<div style="left:121.50px;top:486.27px;font-size:9.6px;line-height:12.0px;color:#d0d0d0;text-align:center;width:19.5px;">M</div>
<div style="left:148.5px;top:481.90000000000003px;width:19.5px;height:19.2px;background:#161616;"></div>
<div style="left:148.80px;top:486.27px;font-size:9.6px;line-height:12.0px;color:#d0d0d0;text-align:center;width:19.5px;">S</div>
<div style="left:185.60px;top:466.60px;width:19.9px;height:49.6px;background:#222222"></div><div style="left:209.30px;top:466.60px;width:19.9px;height:49.6px;background:#141414"></div><div style="left:233.00px;top:467.60px;width:19.9px;height:48.6px;background:#8a12f3;box-shadow:inset 0 0 0 1px rgba(255,255,255,0.07)"></div><div style="left:256.70px;top:466.60px;width:19.9px;height:49.6px;background:#141414"></div><div style="left:291.55px;top:466.60px;width:19.9px;height:49.6px;background:#141414"></div><div style="left:315.25px;top:466.60px;width:19.9px;height:49.6px;background:#141414"></div><div style="left:338.95px;top:467.60px;width:19.9px;height:48.6px;background:#8a12f3;box-shadow:inset 0 0 0 1px rgba(255,255,255,0.07)"></div><div style="left:362.65px;top:466.60px;width:19.9px;height:49.6px;background:#141414"></div><div style="left:397.50px;top:466.60px;width:19.9px;height:49.6px;background:#141414"></div><div style="left:421.20px;top:466.60px;width:19.9px;height:49.6px;background:#141414"></div><div style="left:444.90px;top:467.60px;width:19.9px;height:48.6px;background:#8a12f3;box-shadow:inset 0 0 0 1px rgba(255,255,255,0.07)"></div><div style="left:468.60px;top:466.60px;width:19.9px;height:49.6px;background:#141414"></div><div style="left:503.45px;top:466.60px;width:19.9px;height:49.6px;background:#141414"></div><div style="left:527.15px;top:466.60px;width:19.9px;height:49.6px;background:#141414"></div><div style="left:550.85px;top:467.60px;width:19.9px;height:48.6px;background:#8a12f3;box-shadow:inset 0 0 0 1px rgba(255,255,255,0.07)"></div><div style="left:574.55px;top:466.60px;width:19.9px;height:49.6px;background:#141414"></div><div style="left:609.40px;top:466.60px;width:19.9px;height:49.6px;background:#141414"></div><div style="left:633.10px;top:466.60px;width:19.9px;height:49.6px;background:#141414"></div><div style="left:656.80px;top:467.60px;width:19.9px;height:48.6px;background:#8a12f3;box-shadow:inset 0 0 0 1px rgba(255,255,255,0.07)"></div><div style="left:680.50px;top:466.60px;width:19.9px;height:49.6px;background:#141414"></div><div style="left:715.35px;top:466.60px;width:19.9px;height:49.6px;background:#141414"></div><div style="left:739.05px;top:466.60px;width:19.9px;height:49.6px;background:#141414"></div><div style="left:762.75px;top:467.60px;width:19.9px;height:48.6px;background:#8a12f3;box-shadow:inset 0 0 0 1px rgba(255,255,255,0.07)"></div><div style="left:786.45px;top:466.60px;width:19.9px;height:49.6px;background:#141414"></div><div style="left:821.30px;top:466.60px;width:19.9px;height:49.6px;background:#141414"></div><div style="left:845.00px;top:466.60px;width:19.9px;height:49.6px;background:#141414"></div><div style="left:868.70px;top:467.60px;width:19.9px;height:48.6px;background:#8a12f3;box-shadow:inset 0 0 0 1px rgba(255,255,255,0.07)"></div><div style="left:892.40px;top:466.60px;width:19.9px;height:49.6px;background:#141414"></div><div style="left:927.25px;top:466.60px;width:19.9px;height:49.6px;background:#141414"></div><div style="left:950.95px;top:466.60px;width:19.9px;height:49.6px;background:#141414"></div><div style="left:974.65px;top:467.60px;width:19.9px;height:48.6px;background:#8a12f3;box-shadow:inset 0 0 0 1px rgba(255,255,255,0.07)"></div><div style="left:998.35px;top:466.60px;width:19.9px;height:49.6px;background:#141414"></div>
<svg style="left:1035px;top:466.60px" width="150" height="50" viewBox="1035 143 150 50"><g fill="#eeeeee"><rect x="1044" y="170.2" width="1.7" height="2.7"/><rect x="1047" y="166.9" width="1.4" height="6"/><rect x="1050.1" y="162.9" width="1.6" height="10"/><rect x="1053.1" y="168.8" width="1.7" height="4.1"/><path d="M1082.6 161.4 L1086.6 164.6 L1082.6 167.8 Z"/><path d="M1082.6 167.2 L1086.6 170.4 L1082.6 173.6 Z"/><circle cx="1143.2" cy="172.3" r="1.9"/><circle cx="1170.6" cy="162.6" r="1.55"/><circle cx="1170.6" cy="167.5" r="1.55"/><circle cx="1170.6" cy="172.4" r="1.55"/></g><g stroke="#eeeeee" stroke-width="2.1" fill="none" stroke-linecap="round" stroke-linejoin="round"><path d="M1073 164.6 H1075.5 C1079 164.6 1079.5 170.4 1083.5 170.4 H1084"/><path d="M1073 170.4 H1075.5 C1079 170.4 1079.5 164.6 1083.5 164.6 H1084"/><path d="M1105.3 163.9 L1113.1 171.2 M1113.1 163.9 L1105.3 171.2" stroke-width="2.2"/><path d="M1139 160.6 H1134.5 V170"/><path d="M1137.3 163.6 H1141 L1143.4 166 V170 M1137.3 163.6 V172.3 H1141"/></g></svg>
<div style="left:26.30px;top:543.35px;font-size:11.6px;line-height:14.5px;color:#e2e2e2;text-align:left;white-space:nowrap;letter-spacing:0.85px;-webkit-text-stroke:0.25px #e2e2e2;">DMT_SNARE</div>
<div style="left:26.30px;top:555.25px;font-size:11.6px;line-height:14.5px;color:#e2e2e2;text-align:left;white-space:nowrap;letter-spacing:0.85px;-webkit-text-stroke:0.25px #e2e2e2;">_MID_LAT...</div>
<div style="left:121.2px;top:546.6199999999999px;width:19.5px;height:19.2px;background:#161616;"></div>
<div style="left:121.50px;top:550.99px;font-size:9.6px;line-height:12.0px;color:#d0d0d0;text-align:center;width:19.5px;">M</div>
<div style="left:148.5px;top:546.6199999999999px;width:19.5px;height:19.2px;background:#161616;"></div>
<div style="left:148.80px;top:550.99px;font-size:9.6px;line-height:12.0px;color:#d0d0d0;text-align:center;width:19.5px;">S</div>
<div style="left:185.60px;top:531.32px;width:19.9px;height:49.6px;background:#222222"></div><div style="left:209.30px;top:531.32px;width:19.9px;height:49.6px;background:#141414"></div><div style="left:233.00px;top:531.32px;width:19.9px;height:49.6px;background:#141414"></div><div style="left:256.70px;top:531.32px;width:19.9px;height:49.6px;background:#141414"></div><div style="left:291.55px;top:532.32px;width:19.9px;height:48.6px;background:#61cbca;box-shadow:inset 0 0 0 1px rgba(255,255,255,0.07)"></div><div style="left:315.25px;top:531.32px;width:19.9px;height:49.6px;background:#141414"></div><div style="left:338.95px;top:531.32px;width:19.9px;height:49.6px;background:#141414"></div><div style="left:362.65px;top:531.32px;width:19.9px;height:49.6px;background:#141414"></div><div style="left:397.50px;top:531.32px;width:19.9px;height:49.6px;background:#141414"></div><div style="left:421.20px;top:531.32px;width:19.9px;height:49.6px;background:#141414"></div><div style="left:444.90px;top:531.32px;width:19.9px;height:49.6px;background:#141414"></div><div style="left:468.60px;top:531.32px;width:19.9px;height:49.6px;background:#141414"></div><div style="left:503.45px;top:532.32px;width:19.9px;height:48.6px;background:#61cbca;box-shadow:inset 0 0 0 1px rgba(255,255,255,0.07)"></div><div style="left:527.15px;top:531.32px;width:19.9px;height:49.6px;background:#141414"></div><div style="left:550.85px;top:531.32px;width:19.9px;height:49.6px;background:#141414"></div><div style="left:574.55px;top:531.32px;width:19.9px;height:49.6px;background:#141414"></div><div style="left:609.40px;top:531.32px;width:19.9px;height:49.6px;background:#141414"></div><div style="left:633.10px;top:531.32px;width:19.9px;height:49.6px;background:#141414"></div><div style="left:656.80px;top:531.32px;width:19.9px;height:49.6px;background:#141414"></div><div style="left:680.50px;top:531.32px;width:19.9px;height:49.6px;background:#141414"></div><div style="left:715.35px;top:532.32px;width:19.9px;height:48.6px;background:#61cbca;box-shadow:inset 0 0 0 1px rgba(255,255,255,0.07)"></div><div style="left:739.05px;top:531.32px;width:19.9px;height:49.6px;background:#141414"></div><div style="left:762.75px;top:531.32px;width:19.9px;height:49.6px;background:#141414"></div><div style="left:786.45px;top:531.32px;width:19.9px;height:49.6px;background:#141414"></div><div style="left:821.30px;top:531.32px;width:19.9px;height:49.6px;background:#141414"></div><div style="left:845.00px;top:531.32px;width:19.9px;height:49.6px;background:#141414"></div><div style="left:868.70px;top:531.32px;width:19.9px;height:49.6px;background:#141414"></div><div style="left:892.40px;top:531.32px;width:19.9px;height:49.6px;background:#141414"></div><div style="left:927.25px;top:532.32px;width:19.9px;height:48.6px;background:#61cbca;box-shadow:inset 0 0 0 1px rgba(255,255,255,0.07)"></div><div style="left:950.95px;top:531.32px;width:19.9px;height:49.6px;background:#141414"></div><div style="left:974.65px;top:531.32px;width:19.9px;height:49.6px;background:#141414"></div><div style="left:998.35px;top:531.32px;width:19.9px;height:49.6px;background:#141414"></div>
<svg style="left:1035px;top:531.32px" width="150" height="50" viewBox="1035 143 150 50"><g fill="#eeeeee"><rect x="1044" y="170.2" width="1.7" height="2.7"/><rect x="1047" y="166.9" width="1.4" height="6"/><rect x="1050.1" y="162.9" width="1.6" height="10"/><rect x="1053.1" y="168.8" width="1.7" height="4.1"/><path d="M1082.6 161.4 L1086.6 164.6 L1082.6 167.8 Z"/><path d="M1082.6 167.2 L1086.6 170.4 L1082.6 173.6 Z"/><circle cx="1143.2" cy="172.3" r="1.9"/><circle cx="1170.6" cy="162.6" r="1.55"/><circle cx="1170.6" cy="167.5" r="1.55"/><circle cx="1170.6" cy="172.4" r="1.55"/></g><g stroke="#eeeeee" stroke-width="2.1" fill="none" stroke-linecap="round" stroke-linejoin="round"><path d="M1073 164.6 H1075.5 C1079 164.6 1079.5 170.4 1083.5 170.4 H1084"/><path d="M1073 170.4 H1075.5 C1079 170.4 1079.5 164.6 1083.5 164.6 H1084"/><path d="M1105.3 163.9 L1113.1 171.2 M1113.1 163.9 L1105.3 171.2" stroke-width="2.2"/><path d="M1139 160.6 H1134.5 V170"/><path d="M1137.3 163.6 H1141 L1143.4 166 V170 M1137.3 163.6 V172.3 H1141"/></g></svg>
<div style="left:26.30px;top:608.07px;font-size:11.6px;line-height:14.5px;color:#3a3a3a;text-align:left;white-space:nowrap;letter-spacing:0.85px;-webkit-text-stroke:0.25px #3a3a3a;">DMT_KICK_L</div>
<div style="left:26.30px;top:619.97px;font-size:11.6px;line-height:14.5px;color:#3a3a3a;text-align:left;white-space:nowrap;letter-spacing:0.85px;-webkit-text-stroke:0.25px #3a3a3a;">OW_FLAP....</div>
<div style="left:121.2px;top:611.3399999999999px;width:19.5px;height:19.2px;background:#111111;"></div>
<div style="left:121.50px;top:615.71px;font-size:9.6px;line-height:12.0px;color:#3c3c3c;text-align:center;width:19.5px;">M</div>
<div style="left:148.5px;top:611.3399999999999px;width:19.5px;height:19.2px;background:#111111;"></div>
<div style="left:148.80px;top:615.71px;font-size:9.6px;line-height:12.0px;color:#3c3c3c;text-align:center;width:19.5px;">S</div>
<div style="left:185.60px;top:597.04px;width:19.9px;height:48.6px;background:#5f5f5f;box-shadow:inset 0 0 0 1px rgba(255,255,255,0.07)"></div><div style="left:209.30px;top:596.04px;width:19.9px;height:49.6px;background:#141414"></div><div style="left:233.00px;top:596.04px;width:19.9px;height:49.6px;background:#141414"></div><div style="left:256.70px;top:596.04px;width:19.9px;height:49.6px;background:#141414"></div><div style="left:291.55px;top:597.04px;width:19.9px;height:48.6px;background:#5f5f5f;box-shadow:inset 0 0 0 1px rgba(255,255,255,0.07)"></div><div style="left:315.25px;top:596.04px;width:19.9px;height:49.6px;background:#141414"></div><div style="left:338.95px;top:596.04px;width:19.9px;height:49.6px;background:#141414"></div><div style="left:362.65px;top:596.04px;width:19.9px;height:49.6px;background:#141414"></div><div style="left:397.50px;top:597.04px;width:19.9px;height:48.6px;background:#5f5f5f;box-shadow:inset 0 0 0 1px rgba(255,255,255,0.07)"></div><div style="left:421.20px;top:596.04px;width:19.9px;height:49.6px;background:#141414"></div><div style="left:444.90px;top:596.04px;width:19.9px;height:49.6px;background:#141414"></div><div style="left:468.60px;top:596.04px;width:19.9px;height:49.6px;background:#141414"></div><div style="left:503.45px;top:597.04px;width:19.9px;height:48.6px;background:#5f5f5f;box-shadow:inset 0 0 0 1px rgba(255,255,255,0.07)"></div><div style="left:527.15px;top:596.04px;width:19.9px;height:49.6px;background:#141414"></div><div style="left:550.85px;top:596.04px;width:19.9px;height:49.6px;background:#141414"></div><div style="left:574.55px;top:596.04px;width:19.9px;height:49.6px;background:#141414"></div><div style="left:609.40px;top:597.04px;width:19.9px;height:48.6px;background:#5f5f5f;box-shadow:inset 0 0 0 1px rgba(255,255,255,0.07)"></div><div style="left:633.10px;top:596.04px;width:19.9px;height:49.6px;background:#141414"></div><div style="left:656.80px;top:596.04px;width:19.9px;height:49.6px;background:#141414"></div><div style="left:680.50px;top:596.04px;width:19.9px;height:49.6px;background:#141414"></div><div style="left:715.35px;top:597.04px;width:19.9px;height:48.6px;background:#5f5f5f;box-shadow:inset 0 0 0 1px rgba(255,255,255,0.07)"></div><div style="left:739.05px;top:596.04px;width:19.9px;height:49.6px;background:#141414"></div><div style="left:762.75px;top:596.04px;width:19.9px;height:49.6px;background:#141414"></div><div style="left:786.45px;top:596.04px;width:19.9px;height:49.6px;background:#141414"></div><div style="left:821.30px;top:597.04px;width:19.9px;height:48.6px;background:#5f5f5f;box-shadow:inset 0 0 0 1px rgba(255,255,255,0.07)"></div><div style="left:845.00px;top:596.04px;width:19.9px;height:49.6px;background:#141414"></div><div style="left:868.70px;top:596.04px;width:19.9px;height:49.6px;background:#141414"></div><div style="left:892.40px;top:596.04px;width:19.9px;height:49.6px;background:#141414"></div><div style="left:927.25px;top:597.04px;width:19.9px;height:48.6px;background:#5f5f5f;box-shadow:inset 0 0 0 1px rgba(255,255,255,0.07)"></div><div style="left:950.95px;top:596.04px;width:19.9px;height:49.6px;background:#141414"></div><div style="left:974.65px;top:596.04px;width:19.9px;height:49.6px;background:#141414"></div><div style="left:998.35px;top:596.04px;width:19.9px;height:49.6px;background:#141414"></div>
<svg style="left:1035px;top:596.04px" width="150" height="50" viewBox="1035 143 150 50"><g fill="#3a3a3a"><rect x="1044" y="170.2" width="1.7" height="2.7"/><rect x="1047" y="166.9" width="1.4" height="6"/><rect x="1050.1" y="162.9" width="1.6" height="10"/><rect x="1053.1" y="168.8" width="1.7" height="4.1"/><path d="M1082.6 161.4 L1086.6 164.6 L1082.6 167.8 Z"/><path d="M1082.6 167.2 L1086.6 170.4 L1082.6 173.6 Z"/><circle cx="1143.2" cy="172.3" r="1.9"/><circle cx="1170.6" cy="162.6" r="1.55"/><circle cx="1170.6" cy="167.5" r="1.55"/><circle cx="1170.6" cy="172.4" r="1.55"/></g><g stroke="#3a3a3a" stroke-width="2.1" fill="none" stroke-linecap="round" stroke-linejoin="round"><path d="M1073 164.6 H1075.5 C1079 164.6 1079.5 170.4 1083.5 170.4 H1084"/><path d="M1073 170.4 H1075.5 C1079 170.4 1079.5 164.6 1083.5 164.6 H1084"/><path d="M1105.3 163.9 L1113.1 171.2 M1113.1 163.9 L1105.3 171.2" stroke-width="2.2"/><path d="M1139 160.6 H1134.5 V170"/><path d="M1137.3 163.6 H1141 L1143.4 166 V170 M1137.3 163.6 V172.3 H1141"/></g></svg>
<div style="left:1px;top:595.3399999999999px;width:5px;height:49.7px;background:#666666;"></div>
<svg style="left:0;top:660px" width="1203" height="173" viewBox="0 660 1203 173"><defs><linearGradient id="lg1" x1="0" x2="1" y1="0" y2="0"><stop offset="0" stop-color="#1e1e1e"/><stop offset="0.75" stop-color="#1e1e1e"/><stop offset="1" stop-color="#1e1e1e" stop-opacity="0"/></linearGradient><linearGradient id="lg2" x1="0" x2="1" y1="0" y2="0"><stop offset="0" stop-color="#202020" stop-opacity="0.3"/><stop offset="0.3" stop-color="#202020"/><stop offset="1" stop-color="#202020"/></linearGradient></defs><path d="M251 681.5 H32 Q27 681.5 27 686.5 V803.5 Q27 808.5 32 808.5 H1172.5 Q1177.5 808.5 1177.5 803.5 V691" fill="none" stroke="#1d1d1d" stroke-width="1"/><rect x="30" y="681" width="221" height="1" fill="#1d1d1d"/><rect x="953" y="681" width="143" height="1" fill="url(#lg2)"/><rect x="602" y="706" width="1" height="84" fill="#1e1e1e"/><rect x="60.1" y="694.6" width="1" height="104.4" fill="#5e5e5e"/><rect x="564.5" y="695" width="1" height="103.8" fill="#5e5e5e"/><rect x="60.6" y="746" width="504" height="1.1" fill="#6a6a6a"/><path d="M51.2 698 L57.8 701 L51.2 704 Z" fill="#666"/><path d="M575 698 L567.5 701 L575 704 Z" fill="#666"/><polyline points="60.6,746.6 62.0,746.6 63.0,738.8 64.4,738.8 65.0,758.6 65.6,762.8 66.8,746.6 67.8,735.2 69.0,737.0 69.8,752.6 71.6,767.0 72.8,773.6 74.0,746.6 75.2,713.0 77.0,705.2 78.8,710.6 80.6,746.6 82.4,779.0 83.6,788.0 85.4,779.0 87.2,746.6 89.0,714.2 90.8,711.2 93.2,722.6 95.6,746.6 98.0,763.4 99.2,765.2 101.6,761.0 105.2,759.2 107.0,752.6 108.8,746.6 111.8,723.8 115.4,718.4 118.4,726.2 120.8,746.6 123.8,763.4 126.8,773.6 130.4,763.4 133.4,746.6 135.8,729.8 138.8,723.2 142.4,731.0 145.4,744.2 148.4,750.2 152.0,747.8 155.6,742.4 158.0,746.6 159.8,742.4 162.8,750.2 168.2,762.8 169.8,762.6 173.1,756.6 177.0,746.2 179.1,738.0 183.5,729.8 186.2,731.4 191.2,746.7 196.6,755.5 203.7,746.7 209.2,746.7 211.4,751.1 215.8,756.6 220.2,754.4 224.5,744.5 227.8,736.3 231.6,732.0 235.5,735.2 240.4,746.7 243.7,752.7 248.6,752.7 254.1,748.9 257.3,746.7 263.9,751.1 267.7,752.7 270.5,751.1 273.7,744.5 279.8,738.0 283.6,738.5 288.5,746.7 293.8,751.8 296.6,751.2 302.0,746.3 306.4,745.2 310.8,747.4 318.4,749.1 322.8,746.9 327.2,743.6 331.6,744.7 337.0,750.7 345.8,751.2 351.2,747.4 355.6,743.6 367.7,744.1 373.1,745.2 377.5,747.4 382.4,751.8 386.2,751.8 391.7,748.5 395.0,747.4 399.4,745.2 407.6,745.2 410.3,746.3 418.0,747.4 420.2,746.9" fill="none" stroke="#616161" stroke-width="0.95" stroke-linejoin="round"/><path d="M1161 681.3 H1172.5 M1168 676.8 L1172.7 681.3 L1168 685.8" fill="none" stroke="#5a5a5a" stroke-width="1.5"/><path d="M652.71 766.72 A29.2 29.2 0 1 1 683.49 766.72" fill="none" stroke="#0e0e0e" stroke-width="6" stroke-linecap="round"/><path d="M652.71 766.72 A29.2 29.2 0 1 1 697.30 741.90" fill="none" stroke="#5a5a5a" stroke-width="6" stroke-linecap="round"/><path d="M742.51 766.72 A29.2 29.2 0 1 1 773.29 766.72" fill="none" stroke="#0e0e0e" stroke-width="6" stroke-linecap="round"/><path d="M832.31 766.72 A29.2 29.2 0 1 1 863.09 766.72" fill="none" stroke="#0e0e0e" stroke-width="6" stroke-linecap="round"/><path d="M922.11 766.72 A29.2 29.2 0 1 1 952.89 766.72" fill="none" stroke="#0e0e0e" stroke-width="6" stroke-linecap="round"/><path d="M1011.91 766.72 A29.2 29.2 0 1 1 1042.69 766.72" fill="none" stroke="#0e0e0e" stroke-width="6" stroke-linecap="round"/><path d="M1101.71 766.72 A29.2 29.2 0 1 1 1132.49 766.72" fill="none" stroke="#0e0e0e" stroke-width="6" stroke-linecap="round"/></svg>
<div style="left:630.10px;top:736.88px;font-size:9.8px;line-height:12.25px;color:#5a5a5a;text-align:center;width:80px;">0.0 dB</div>
<div style="left:618.10px;top:783.18px;font-size:13.3px;line-height:16.62px;color:#4c4c4c;text-align:center;width:100px;">Volume</div>
<div style="left:719.90px;top:736.88px;font-size:9.8px;line-height:12.25px;color:#5a5a5a;text-align:center;width:80px;">0.00</div>
<div style="left:707.90px;top:783.18px;font-size:13.3px;line-height:16.62px;color:#4c4c4c;text-align:center;width:100px;">Pitch</div>
<div style="left:809.70px;top:736.88px;font-size:9.8px;line-height:12.25px;color:#5a5a5a;text-align:center;width:80px;">0 dB</div>
<div style="left:797.70px;top:783.18px;font-size:13.3px;line-height:16.62px;color:#4c4c4c;text-align:center;width:100px;">Gain</div>
<div style="left:899.50px;top:736.88px;font-size:9.8px;line-height:12.25px;color:#5a5a5a;text-align:center;width:80px;">0.0%</div>
<div style="left:887.50px;top:783.18px;font-size:13.3px;line-height:16.62px;color:#4c4c4c;text-align:center;width:100px;">Mix</div>
<div style="left:989.30px;top:736.88px;font-size:9.8px;line-height:12.25px;color:#5a5a5a;text-align:center;width:80px;">-inf</div>
<div style="left:977.30px;top:783.18px;font-size:13.3px;line-height:16.62px;color:#4c4c4c;text-align:center;width:100px;">Reverb</div>
<div style="left:1079.10px;top:736.88px;font-size:9.8px;line-height:12.25px;color:#5a5a5a;text-align:center;width:80px;">-inf</div>
<div style="left:1067.10px;top:783.18px;font-size:13.3px;line-height:16.62px;color:#4c4c4c;text-align:center;width:100px;">Delay</div>
<div style="left:523.50px;top:675.18px;font-size:10px;line-height:12.5px;color:#363636;text-align:left;white-space:nowrap;font-weight:bold;letter-spacing:1.03px;">DMT_KICK_LOW_FLAP.WAV</div>
<div style="left:1112.60px;top:675.18px;font-size:10px;line-height:12.5px;color:#505050;text-align:left;white-space:nowrap;font-weight:bold;letter-spacing:0.84px;">ALL FX</div>
<svg style="left:1180px;top:810px" width="23" height="23" viewBox="1180 810 23 23"><path d="M1203 814 L1184 833 M1203 819 L1189 833 M1203 824 L1194 833" stroke="#8a8a8a" stroke-width="1.2"/></svg>
<div style="left:760px;top:347.5px;width:279px;height:296.24px;background:#262626;box-shadow:0 2px 8px rgba(0,0,0,0.4);"></div>
<div style="left:760px;top:516.78px;width:279px;height:42.32px;background:#3f3f3f;"></div>
<div style="left:775.90px;top:361.18px;font-size:13.2px;line-height:16.5px;color:#ececec;text-align:left;white-space:nowrap;">1 + 3</div>
<div style="left:775.90px;top:403.50px;font-size:13.2px;line-height:16.5px;color:#ececec;text-align:left;white-space:nowrap;">Four on the floor</div>
<div style="left:775.90px;top:445.82px;font-size:13.2px;line-height:16.5px;color:#ececec;text-align:left;white-space:nowrap;">Offset</div>
<div style="left:775.90px;top:488.14px;font-size:13.2px;line-height:16.5px;color:#ececec;text-align:left;white-space:nowrap;">Offset 2</div>
<div style="left:775.90px;top:530.46px;font-size:13.2px;line-height:16.5px;color:#ececec;text-align:left;white-space:nowrap;">Double</div>
<div style="left:775.90px;top:572.78px;font-size:13.2px;line-height:16.5px;color:#ececec;text-align:left;white-space:nowrap;">Double Offset</div>
<div style="left:775.90px;top:615.10px;font-size:13.2px;line-height:16.5px;color:#ececec;text-align:left;white-space:nowrap;">Double Offset 2</div>
<svg style="left:1005px;top:525px" width="30" height="25" viewBox="1005 525 30 25"><path d="M1013 538.5 L1017.5 542.8 L1025.5 534" fill="none" stroke="#eeeeee" stroke-width="2" stroke-linecap="round" stroke-linejoin="round"/></svg>
<div style="left:1039px;top:345.0px;width:200.8px;height:253.79999999999998px;background:#262626;box-shadow:0 7px 12px rgba(0,0,0,0.22);"></div>
<div style="left:1203px;top:598.8px;width:37px;height:2.5px;background:#ffffff;"></div>
<div style="left:1039px;top:345.0px;width:200.8px;height:42.3px;background:#404040;"></div>
<div style="left:1054.00px;top:358.68px;font-size:13.2px;line-height:16.5px;color:#ececec;text-align:left;white-space:nowrap;">Kick</div>
<div style="left:1054.00px;top:400.98px;font-size:13.2px;line-height:16.5px;color:#ececec;text-align:left;white-space:nowrap;">Snare</div>
<div style="left:1054.00px;top:443.28px;font-size:13.2px;line-height:16.5px;color:#ececec;text-align:left;white-space:nowrap;">Closed Hihat</div>
<div style="left:1054.00px;top:485.58px;font-size:13.2px;line-height:16.5px;color:#ececec;text-align:left;white-space:nowrap;">Open Hihat</div>
<div style="left:1054.00px;top:527.88px;font-size:13.2px;line-height:16.5px;color:#ececec;text-align:left;white-space:nowrap;">Tom</div>
<div style="left:1054.00px;top:570.18px;font-size:13.2px;line-height:16.5px;color:#ececec;text-align:left;white-space:nowrap;">Percussion</div>
<svg style="left:1039px;top:340px" width="202" height="260" viewBox="1039 340 202 260"><g fill="none" stroke="#eeeeee" stroke-width="2" stroke-linecap="round" stroke-linejoin="round"><path d="M1221.2 361.80 L1226 366.40 L1221.2 371.00"/><path d="M1221.2 404.10 L1226 408.70 L1221.2 413.30"/><path d="M1221.2 446.40 L1226 451.00 L1221.2 455.60"/><path d="M1221.2 488.70 L1226 493.30 L1221.2 497.90"/><path d="M1221.2 531.00 L1226 535.60 L1221.2 540.20"/><path d="M1221.2 573.30 L1226 577.90 L1221.2 582.50"/></g></svg>
<svg style="left:1085px;top:352px" width="25" height="32" viewBox="1085 352 25 32"><path d="M1090 357 L1090 376.3 L1094.5 372 L1097.8 378.8 L1100.8 377.6 L1097.7 370.6 L1103.4 370.6 Z" fill="#fff" stroke="#000" stroke-width="1.3" stroke-linejoin="round"/></svg></div></body></html>
